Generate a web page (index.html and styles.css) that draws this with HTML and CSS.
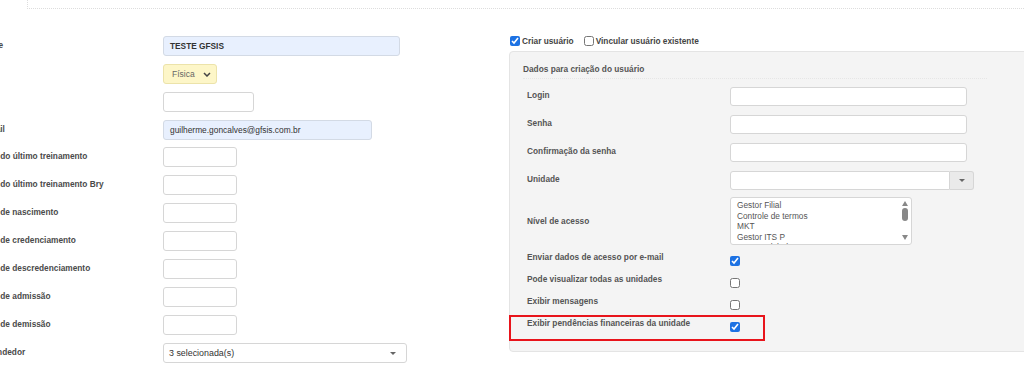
FILE: index.html
```html
<!DOCTYPE html>
<html lang="pt-BR">
<head>
    <meta charset="UTF-8">
    <title>Cadastro de usuário</title>
    <link rel="stylesheet" href="styles.css">
</head>
<body>
    <div class="top-box"></div>

    <div class="page">
        <!-- dados pessoais -->
        <div class="col-left">
            <div class="row"><label>Nome</label><div class="field input autofill wide">TESTE GFSIS</div></div>
            <div class="row"><label></label>
                <div class="field select-yellow">Física
                    <svg width="8" height="5" viewBox="0 0 8 5"><path d="M1 1l3 3 3-3" fill="none" stroke="#444" stroke-width="1.5"/></svg>
                </div>
            </div>
            <div class="row"><label></label><div class="field input medium"></div></div>
            <div class="row"><label>E-mail</label><div class="field input autofill email">guilherme.goncalves@gfsis.com.br</div></div>
            <div class="row"><label>Data do último treinamento</label><div class="field input small"></div></div>
            <div class="row"><label>Data do último treinamento Bry</label><div class="field input small"></div></div>
            <div class="row"><label>Data de nascimento</label><div class="field input small"></div></div>
            <div class="row"><label>Data de credenciamento</label><div class="field input small"></div></div>
            <div class="row"><label>Data de descredenciamento</label><div class="field input small"></div></div>
            <div class="row"><label>Data de admissão</label><div class="field input small"></div></div>
            <div class="row"><label>Data de demissão</label><div class="field input small"></div></div>
            <div class="row"><label>É vendedor</label>
                <div class="field input select-multi">3 selecionada(s)<span class="caret"></span></div>
            </div>
        </div>

        <!-- usuário -->
        <div class="col-right">
            <div class="user-mode">
                <label><input type="checkbox" checked> Criar usuário</label>
                <label><input type="checkbox"> Vincular usuário existente</label>
            </div>

            <div class="panel">
                <div class="panel-title">Dados para criação do usuário</div>

                <div class="prow"><label>Login</label><div class="field input pinput"></div></div>
                <div class="prow"><label>Senha</label><div class="field input pinput"></div></div>
                <div class="prow"><label>Confirmação da senha</label><div class="field input pinput"></div></div>
                <div class="prow"><label>Unidade</label>
                    <div class="combo">
                        <div class="field input combo-input"></div>
                        <div class="combo-btn"><span class="caret"></span></div>
                    </div>
                </div>
                <div class="prow prow-tall"><label>Nível de acesso</label>
                    <div class="listbox">
                        <ul>
                            <li>Gestor Filial</li>
                            <li>Controle de termos</li>
                            <li>MKT</li>
                            <li>Gestor ITS P</li>
                            <li>Gestor Global</li>
                        </ul>
                        <div class="scroll">
                            <span class="arrow-up"></span>
                            <span class="thumb"></span>
                            <span class="arrow-down"></span>
                        </div>
                    </div>
                </div>
                <div class="crow"><label>Enviar dados de acesso por e-mail</label><input type="checkbox" checked></div>
                <div class="crow"><label>Pode visualizar todas as unidades</label><input type="checkbox"></div>
                <div class="crow"><label>Exibir mensagens</label><input type="checkbox"></div>
                <div class="crow highlight"><label>Exibir pendências financeiras da unidade</label><input type="checkbox" checked></div>
            </div>
        </div>
    </div>
</body>
</html>
```

FILE: styles.css
```css
body {
    margin: 0;
    font-family: 'Liberation Sans', Arial, sans-serif;
    font-size: 8.3px;
    color: #555;
    background: #fff;
    overflow: hidden;
    width: 1024px;
    height: 368px;
}

.top-box {
    margin-left: 27px;
    height: 8px;
    border: 1px dotted #ddd;
    border-top: none;
    border-right: none;
}

.page {
    display: flex;
    margin-left: -20px;
    padding-top: 23px;
}

.col-left {
    width: 529px;
    flex-shrink: 0;
}

.row {
    display: flex;
    align-items: center;
    height: 28px;
}

.row:nth-child(4) {
    height: 27px;
}

.row label {
    width: 183px;
    flex-shrink: 0;
    font-weight: bold;
    color: #4a4a4a;
    white-space: nowrap;
    margin-top: -2px;
}

.field {
    box-sizing: border-box;
    height: 20px;
    border: 1px solid #d6d6d6;
    border-radius: 3px;
    background: #fff;
    display: flex;
    align-items: center;
    padding: 0 6px;
    color: #333;
    white-space: nowrap;
}

.autofill {
    background: #e8f0fe;
    border-color: #d3dae5;
}

.wide { width: 237px; font-weight: bold; color: #333; }
.email { width: 209px; font-size: 8.4px; }
.medium { width: 91px; }
.small { width: 74px; }

.select-yellow {
    width: 54px;
    background: #fdf6c8;
    border-color: #ece3aa;
    color: #666;
    font-size: 8.5px;
    justify-content: space-between;
    padding: 0 5px 0 8px;
}

.select-multi {
    width: 244px;
    font-size: 8.9px;
    justify-content: space-between;
    padding: 0 10px 0 5px;
}

.caret {
    width: 0;
    height: 0;
    border-left: 3px solid transparent;
    border-right: 3px solid transparent;
    border-top: 3px solid #666;
}

.col-right {
    width: 560px;
    flex-shrink: 0;
}

.user-mode {
    display: flex;
    gap: 10px;
    height: 18px;
    align-items: center;
    margin-left: 1px;
    font-weight: bold;
    color: #444;
}

.user-mode label {
    display: flex;
    align-items: center;
}

input[type=checkbox] {
    width: 10px;
    height: 10px;
    margin: 0 2px 0 0;
    accent-color: #1d72e3;
}

.panel {
    margin-top: 1px;
    background: #f4f4f4;
    border: 1px solid #e4e4e4;
    border-radius: 4px;
    padding: 0 0 13px 17px;
}

.panel-title {
    margin: 0 0 3px -4px;
    width: 464px;
    padding: 11px 0 3px;
    line-height: 12px;
    font-weight: bold;
    color: #555;
    border-bottom: 1px dotted #e6e6e6;
}

.prow {
    display: flex;
    align-items: center;
    height: 28px;
}

.prow label, .crow label {
    width: 203px;
    flex-shrink: 0;
    font-weight: bold;
    color: #555;
    margin-top: -3px;
}

.pinput { width: 237px; height: 19px; }

.prow-tall {
    height: 56px;
}

.prow-tall .listbox {
    align-self: flex-start;
    margin-top: 3px;
}

.combo {
    display: flex;
}

.combo-input {
    width: 220px;
    height: 19px;
    border-radius: 3px 0 0 3px;
}

.combo-btn {
    box-sizing: border-box;
    width: 24px;
    height: 19px;
    background: #eaeaea;
    border: 1px solid #d6d6d6;
    border-left: none;
    border-radius: 0 3px 3px 0;
    display: flex;
    align-items: center;
    justify-content: center;
}

.listbox {
    box-sizing: border-box;
    width: 182px;
    height: 48px;
    background: #fff;
    border: 1px solid #d6d6d6;
    border-radius: 3px;
    display: flex;
    overflow: hidden;
}

.listbox ul {
    flex: 1;
    list-style: none;
    margin: 0;
    padding: 2px 0 0 6px;
    font-size: 8.3px;
    line-height: 10.5px;
    color: #555;
}

.scroll {
    width: 12px;
    display: flex;
    flex-direction: column;
    align-items: center;
    padding-top: 3px;
}

.arrow-up, .arrow-down {
    width: 0;
    height: 0;
    border-left: 3.5px solid transparent;
    border-right: 3.5px solid transparent;
}

.arrow-up { border-bottom: 5px solid #888; }
.arrow-down { border-top: 5px solid #888; margin-top: 14px; }

.thumb {
    width: 6px;
    height: 13px;
    margin-top: 2px;
    border-radius: 3px;
    background: #888;
}

.crow {
    position: relative;
    display: flex;
    align-items: flex-start;
    height: 22px;
}

.crow label {
    margin-top: 0;
    line-height: 14px;
}

.crow input[type=checkbox] {
    margin-top: 6px;
}

.highlight::after {
    content: "";
    position: absolute;
    left: -18px;
    top: -1px;
    width: 252px;
    height: 22px;
    border: 2px solid #e8141b;
}
```
